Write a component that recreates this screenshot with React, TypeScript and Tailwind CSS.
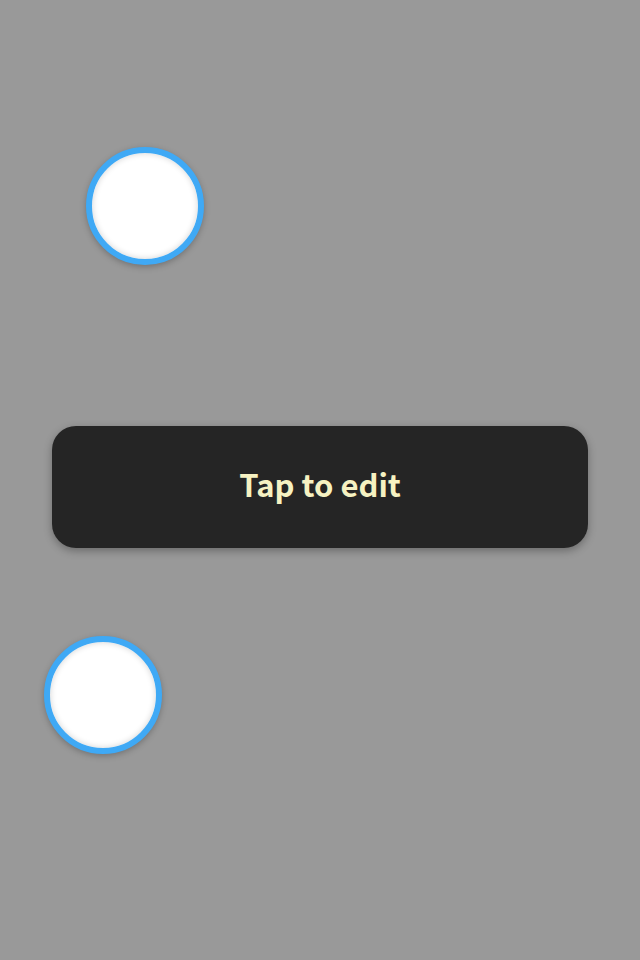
export default function App() {
  return (
    <div className="w-[640px] h-[960px] bg-[#999999] flex flex-col items-start pt-[147px] overflow-hidden">
      {/* top handle */}
      <div className="ml-[86px] w-[118px] h-[118px] rounded-full border-[6px] border-[#3fa9f5] bg-white shadow-[0_2px_6px_rgba(0,0,0,0.25),inset_0_0_6px_rgba(0,0,0,0.18)]" />

      {/* editable label */}
      <div className="mt-[161px] ml-[52px] w-[536px] h-[122px] rounded-[24px] bg-[#252525] shadow-[0_3px_8px_rgba(0,0,0,0.3)] flex items-center justify-center pb-[7px]">
        <span className="font-['Noto_Sans_CJK_SC','Noto_Sans',sans-serif] font-bold text-[31px] leading-none text-[#f6f2c2]">
          Tap to edit
        </span>
      </div>

      {/* bottom handle */}
      <div className="mt-[88px] ml-[44px] w-[118px] h-[118px] rounded-full border-[6px] border-[#3fa9f5] bg-white shadow-[0_2px_6px_rgba(0,0,0,0.25),inset_0_0_6px_rgba(0,0,0,0.18)]" />
    </div>
  )
}
